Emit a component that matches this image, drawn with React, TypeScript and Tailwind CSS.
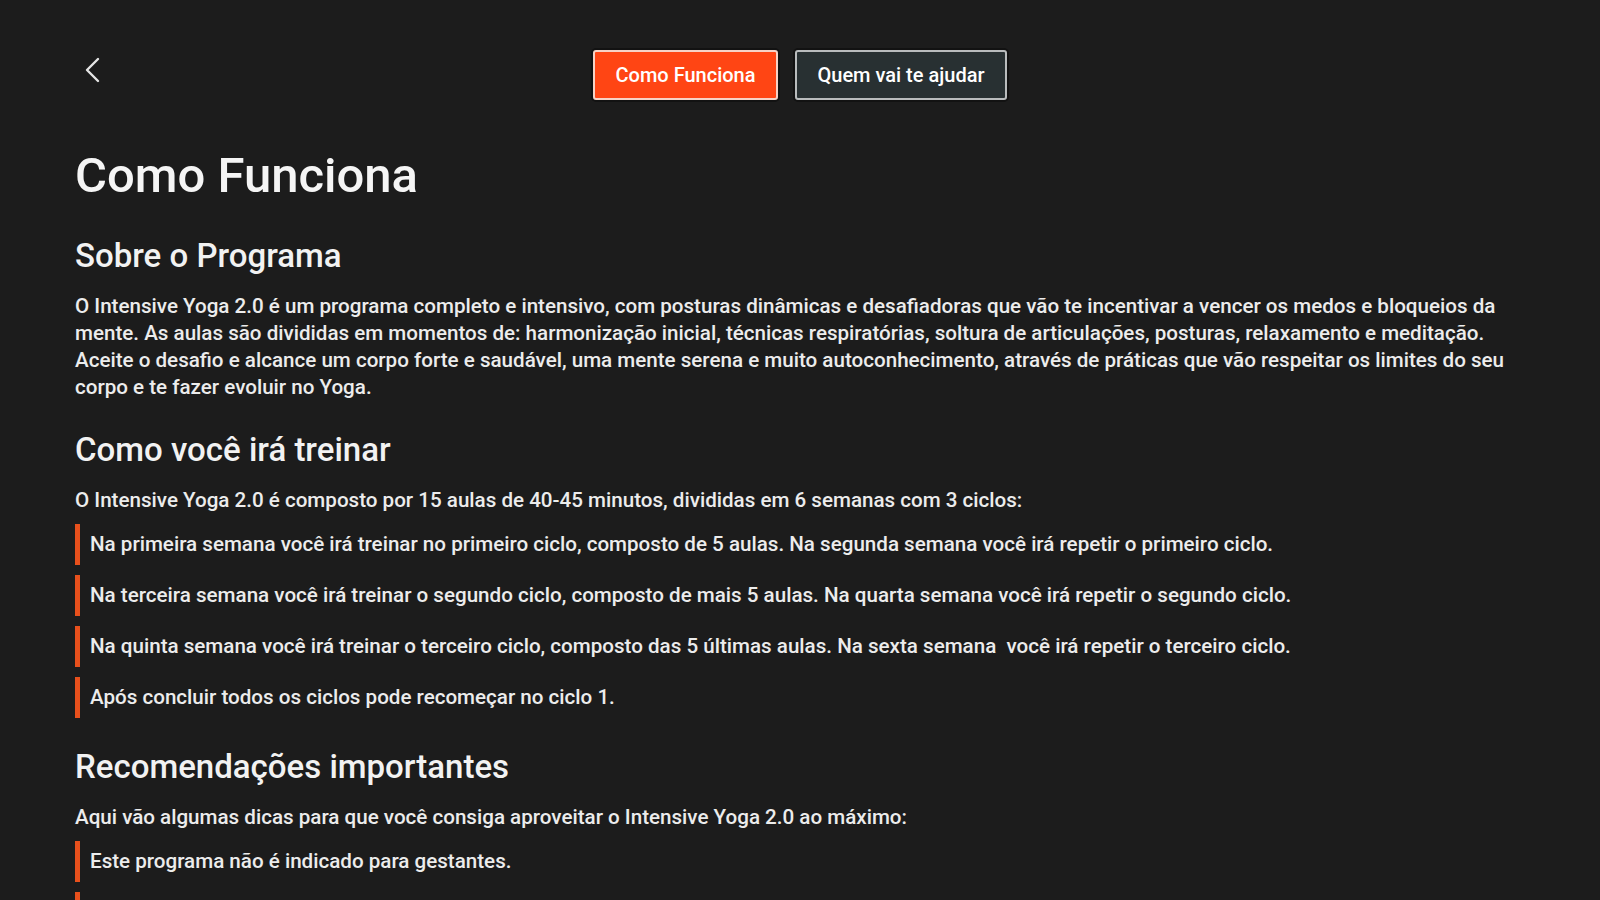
import React, { useState } from 'react';

type Tab = 'como' | 'quem';

const sections = {
    sobre:
        'O Intensive Yoga 2.0 é um programa completo e intensivo, com posturas dinâmicas e desafiadoras que vão te incentivar a vencer os medos e bloqueios da mente. As aulas são divididas em momentos de: harmonização inicial, técnicas respiratórias, soltura de articulações, posturas, relaxamento e meditação. Aceite o desafio e alcance um corpo forte e saudável, uma mente serena e muito autoconhecimento, através de práticas que vão respeitar os limites do seu corpo e te fazer evoluir no Yoga.',
    treinoIntro:
        'O Intensive Yoga 2.0 é composto por 15 aulas de 40-45 minutos, divididas em 6 semanas com 3 ciclos:',
    treino: [
        'Na primeira semana você irá treinar no primeiro ciclo, composto de 5 aulas. Na segunda semana você irá repetir o primeiro ciclo.',
        'Na terceira semana você irá treinar o segundo ciclo, composto de mais 5 aulas. Na quarta semana você irá repetir o segundo ciclo.',
        'Na quinta semana você irá treinar o terceiro ciclo, composto das 5 últimas aulas. Na sexta semana  você irá repetir o terceiro ciclo.',
        'Após concluir todos os ciclos pode recomeçar no ciclo 1.',
    ],
    recIntro: 'Aqui vão algumas dicas para que você consiga aproveitar o Intensive Yoga 2.0 ao máximo:',
    rec: [
        'Este programa não é indicado para gestantes.',
        'Respeite os limites do seu corpo e evolua no seu ritmo.',
    ],
};

const BackIcon = () => (
    <svg width="18" height="26" viewBox="0 0 18 26" fill="none">
        <polyline points="15,2 4,13 15,24" stroke="#e5e5e5" strokeWidth="2.4" strokeLinecap="round" strokeLinejoin="round" />
    </svg>
);

const Heading = ({ children }: { children: React.ReactNode }) => (
    <h2 className="mt-[30px] text-[33px] leading-[38px] font-medium text-[#f2f2f2]">{children}</h2>
);

const Paragraph = ({ children }: { children: React.ReactNode }) => (
    <p className="mt-[18px] text-[20.6px] leading-[27px] font-medium text-[#ececec]">{children}</p>
);

const Bullets = ({ items }: { items: string[] }) => (
    <ul className="mt-[10px] flex flex-col gap-[10px]">
        {items.map((item, i) => (
            <li key={i} className="border-l-[5px] border-[#e8501c] pl-[10px] py-[7px] text-[20.6px] leading-[27px] font-medium text-[#ececec] whitespace-pre-wrap">
                {item}
            </li>
        ))}
    </ul>
);

export default function App() {
    const [tab, setTab] = useState<Tab>('como');

    return (
        <div className="min-h-screen bg-[#1c1c1c] text-white" style={{ fontFamily: 'Roboto, "Noto Sans", sans-serif' }}>
            <header className="grid grid-cols-[1fr_auto_1fr] items-start px-[75px] pt-[50px]">
                <button className="justify-self-start pl-[8px] pt-[7px]">
                    <BackIcon />
                </button>
                <div className="flex gap-[17px]">
                    <button
                        onClick={() => setTab('como')}
                        className={
                            tab === 'como'
                                ? 'h-[50px] w-[185px] rounded-[3px] border-2 border-[#f6d2c6] bg-[#ff4514] text-[20px] font-medium text-white shadow-[0_0_0_2px_#121212]'
                                : 'h-[50px] w-[185px] rounded-[3px] border-2 border-[#b9bcbd] bg-[#283032] text-[20px] font-medium text-white shadow-[0_0_0_2px_#121212]'
                        }
                    >
                        Como Funciona
                    </button>
                    <button
                        onClick={() => setTab('quem')}
                        className={
                            tab === 'quem'
                                ? 'h-[50px] w-[212px] rounded-[3px] border-2 border-[#f6d2c6] bg-[#ff4514] text-[20px] font-medium text-white shadow-[0_0_0_2px_#121212]'
                                : 'h-[50px] w-[212px] rounded-[3px] border-2 border-[#b9bcbd] bg-[#283032] text-[20px] font-medium text-white shadow-[0_0_0_2px_#121212]'
                        }
                    >
                        Quem vai te ajudar
                    </button>
                </div>
                <div />
            </header>

            <main className="px-[75px] pb-10">
                <h1 className="mt-[46px] text-[49px] leading-[60px] font-medium text-[#f5f5f5]">Como Funciona</h1>

                <h2 className="mt-[31px] text-[33px] leading-[38px] font-medium text-[#f2f2f2]">Sobre o Programa</h2>
                <Paragraph>{sections.sobre}</Paragraph>

                <Heading>Como você irá treinar</Heading>
                <Paragraph>{sections.treinoIntro}</Paragraph>
                <Bullets items={sections.treino} />

                <Heading>Recomendações importantes</Heading>
                <Paragraph>{sections.recIntro}</Paragraph>
                <Bullets items={sections.rec} />
            </main>
        </div>
    );
}
